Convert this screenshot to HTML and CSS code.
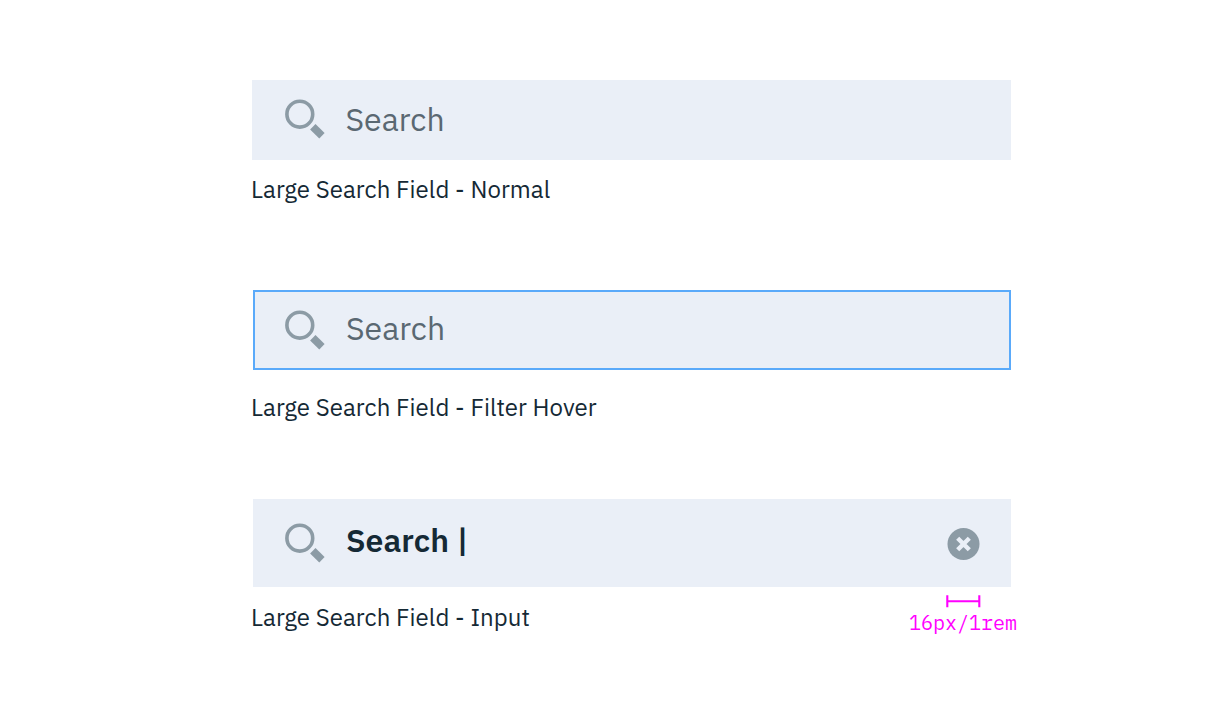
FILE: index.html
```html
<!DOCTYPE html>
<html lang="en">
<head>
<meta charset="utf-8">
<title>Large Search Field</title>
<link rel="stylesheet" href="styles.css">
</head>
<body>
<svg width="0" height="0" class="defs">
  <symbol id="search" viewBox="0 0 40 40">
    <circle cx="14.8" cy="15.2" r="12.9" fill="none" stroke="#8c9ba5" stroke-width="3.6"/>
    <path d="M30.5 25 39.6 34 34.3 39.4 25.1 30.5Z" fill="#8c9ba5"/>
  </symbol>
</svg>
<main class="page">
  <section class="example normal">
    <div class="field">
      <svg class="icon"><use href="#search"/></svg>
      <span class="placeholder">Search</span>
    </div>
    <div class="caption">Large Search Field - Normal</div>
  </section>
  <section class="example hover">
    <div class="field">
      <svg class="icon"><use href="#search"/></svg>
      <span class="placeholder">Search</span>
    </div>
    <div class="caption">Large Search Field - Filter Hover</div>
  </section>
  <section class="example input">
    <div class="field">
      <svg class="icon"><use href="#search"/></svg>
      <span class="value">Search |</span>
      <svg class="clear" viewBox="0 0 32 32">
        <circle cx="15.5" cy="16" r="16" fill="#8c9ba5"/>
        <path d="M9.7 10.2 21.3 21.8M21.3 10.2 9.7 21.8" stroke="#eaeff7" stroke-width="4.4"/>
      </svg>
    </div>
    <div class="footer">
      <div class="caption">Large Search Field - Input</div>
      <div class="measure">
        <svg class="ruler" viewBox="0 0 34 12"><path d="M1.3 .3V12.3M33.3 .3V12.3M1 6.3H33" stroke="#ff00ff" stroke-width="2.1" fill="none"/></svg>
        <div class="size">16px/1rem</div>
      </div>
    </div>
  </section>
</main>
</body>
</html>
```
FILE: styles.css
```css
body {
  margin: 0;
  background: #fff;
  font-family: "IBM Plex Sans", "Open Sans", sans-serif;
  color: #152935;
}
.defs { display: block; }
.page {
  box-sizing: border-box;
  width: 1011px;
  height: 720px;
  padding: 80px 0 0 252px;
}
.field {
  box-sizing: border-box;
  display: flex;
  align-items: flex-start;
  height: 80px;
  padding: 19px 32px 0 33px;
  background: #eaeff7;
}
.icon, .clear {
  flex: none;
  overflow: visible;
}
.icon {
  width: 40px;
  height: 40px;
}
.placeholder, .value {
  margin-left: 20.5px;
  font-size: 32px;
  line-height: 42px;
  white-space: pre;
}
.placeholder {
  margin-top: -1px;
  color: #5a6872;
}
.value { font-weight: 600; }
.caption {
  margin: 13px 0 0 -1px;
  font-size: 24px;
  line-height: 32px;
  letter-spacing: 0.05px;
  white-space: nowrap;
}
.hover { margin-top: 85px; }
.hover .field {
  padding: 17px 30px 0 30px;
  margin-left: 1px;
  border: 2px solid #5aaafa;
}
.hover .placeholder {
  margin-top: -2px;
  margin-left: 21px;
}
.hover .icon { margin-top: 0.6px; }
.hover .caption { margin-top: 21px; }
.input { margin-top: 76px; }
.input .field {
  height: 88px;
  margin-left: 1px;
  padding: 24px 31px 0 32px;
}
.value {
  margin-top: -4px;
  margin-left: 21px;
}
.clear {
  width: 32px;
  height: 32px;
  margin: 5px 0 0 auto;
}
.footer {
  display: flex;
  justify-content: space-between;
}
.input .caption { margin-top: 14px; }
.measure {
  width: 102px;
  margin-top: 8px;
}
.ruler {
  display: block;
  width: 34px;
  height: 12px;
  margin-left: 37px;
  overflow: visible;
}
.size {
  margin-top: 4px;
  color: #ff00ff;
  font: 20px/24px "IBM Plex Mono", "Liberation Mono", monospace;
}
```
